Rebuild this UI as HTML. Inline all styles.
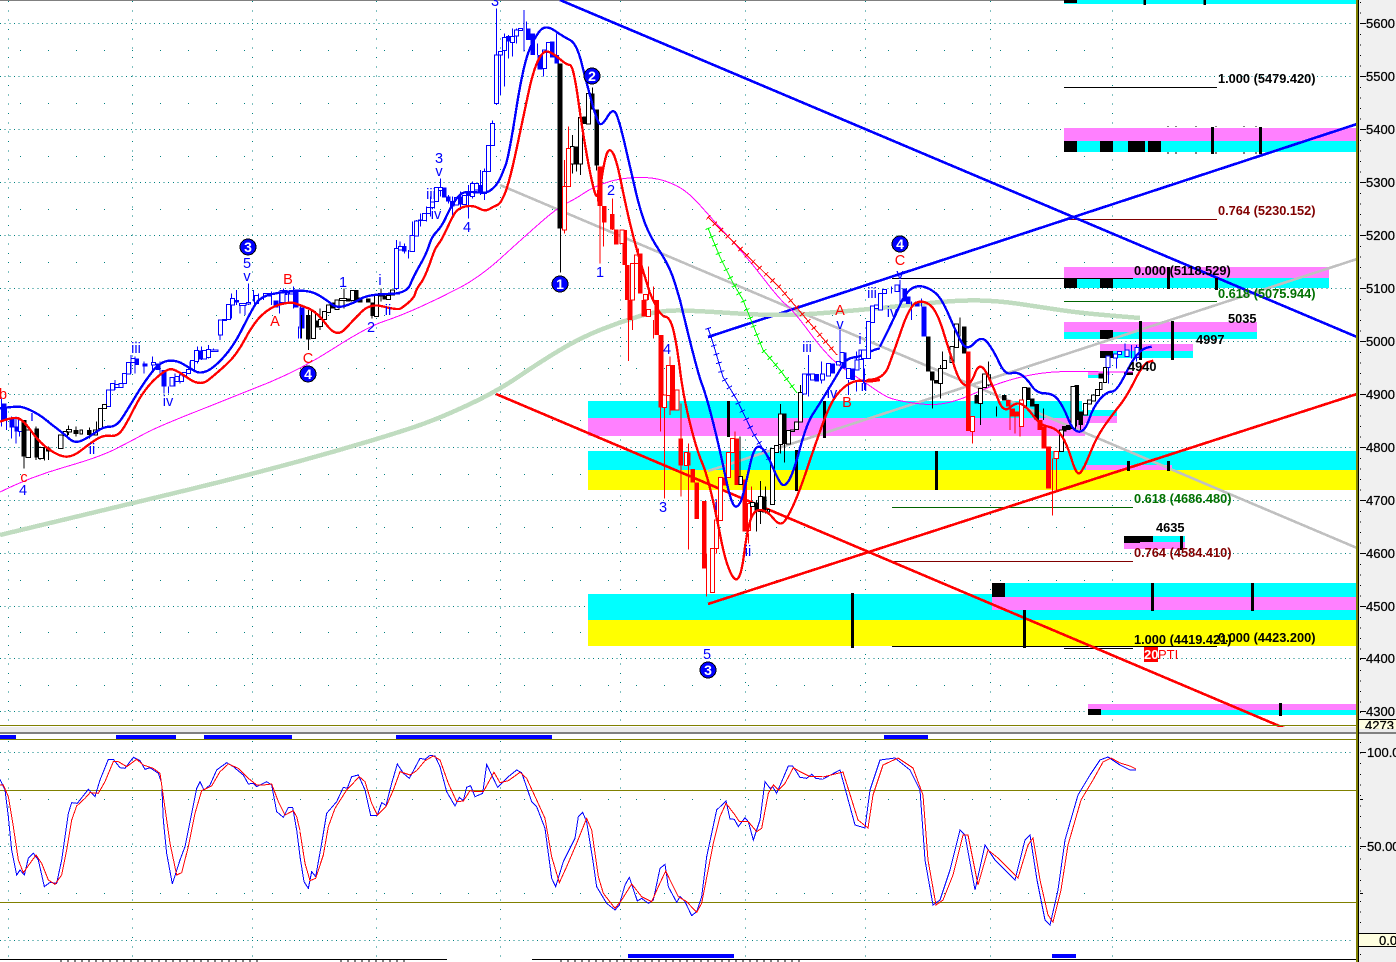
<!DOCTYPE html>
<html><head><meta charset="utf-8"><style>
html,body{margin:0;padding:0;background:#fff;overflow:hidden}
svg{display:block;font-family:"Liberation Sans",sans-serif;shape-rendering:crispEdges}
.w{fill:none;stroke-width:3}.t{fill:none;stroke-width:14}.h{fill:#fff;stroke-width:3}.b{fill:none;stroke-width:7;stroke-linejoin:round}
.bl{stroke:#00f}.k{stroke:#000}.r{stroke:#f00}
.L{font-size:14.5px;fill:#00f;text-anchor:middle}.R{font-size:14.5px;fill:#f00;text-anchor:middle}
.f{font-size:12.8px;font-weight:bold}.a{font-size:13px;fill:#000;stroke:#000;stroke-width:.25}
.c circle{fill:#00f;stroke:#000;stroke-width:1}.c text{font-size:14px;font-weight:bold;fill:#fff;text-anchor:middle}
</style></head><body>
<svg width="1396" height="962" viewBox="0 0 1396 962" xmlns="http://www.w3.org/2000/svg">
<rect width="1396" height="962" fill="#fff"/>
<rect x="1359" y="0" width="37" height="962" fill="#f0f0f0"/>
<rect x="0" y="0" width="1396" height="1" fill="#808080"/>
<!-- grid -->
<g fill="none" stroke="#008080" stroke-width="1">
<path stroke-dasharray="1 3.67" d="M0 23.5H1353M0 76.5H1353M0 129.5H1353M0 182.5H1353M0 235.5H1353M0 288.5H1353M0 341.5H1353M0 394.5H1353M0 447.5H1353M0 500.5H1353M0 553.5H1353M0 606.5H1353M0 658.5H1353M0 711.5H1353M0 752.5H1353M0 846.5H1353M0 940.5H1353"/>
<path stroke-dasharray="1 27" d="M20 50.5H1090M20 103.5H1090M20 156.5H1090M20 209.5H1090M20 262.5H1090M20 315.5H1090M20 368.5H1090M20 420.5H1090M20 474.5H1090M20 527.5H1090M20 580.5H1090M20 632.5H1090M20 685.5H1090M20 799.5H1090M20 893.5H1090"/>
<path stroke-dasharray="1 8.33" d="M8.5 1V725M132.5 1V725M252.5 1V725M376.5 1V725M500.5 1V725M620.5 1V725M745.5 1V725M865.5 1V725M990.5 1V725M1112.5 1V725M8.5 741V958M132.5 741V958M252.5 741V958M376.5 741V958M500.5 741V958M620.5 741V958M745.5 741V958M865.5 741V958M990.5 741V958M1112.5 741V958"/>
</g>
<!-- zones -->
<rect x="1064" y="0" width="292" height="4" fill="#0ff"/><rect x="1064" y="0" width="13" height="3" fill="#000"/>
<path d="M1144.5 0V5M1204.5 0V5" stroke="#000" stroke-width="2.5"/>
<rect x="1064" y="128" width="292" height="13" fill="#ff80ff"/><rect x="1064" y="141" width="292" height="11" fill="#0ff"/>
<path d="M1064 141h13v11h-13zM1100 141h13v11h-13zM1128 141h17v11h-17zM1148 141h13v11h-13z" fill="#000"/>
<path d="M1212.5 127V154M1260.5 127V154" stroke="#000" stroke-width="3"/>
<path d="M1168 126v1M1176 126v1M1196 126v1M1216 126v1M1244 126v1M1256 126v1M1168 152v2M1176 152v2M1196 152v2M1216 152v2M1244 152v2M1256 152v2" stroke="#000"/>
<rect x="1064" y="267" width="265" height="11" fill="#ff80ff"/><rect x="1064" y="278" width="265" height="10" fill="#0ff"/>
<path d="M1064 278h13v10h-13zM1100 278h13v10h-13z" fill="#000"/>
<rect x="1064" y="322" width="193" height="10" fill="#ff80ff"/><rect x="1064" y="332" width="193" height="7" fill="#0ff"/>
<rect x="1100" y="330" width="13" height="9" fill="#000"/>
<rect x="1100" y="344" width="93" height="7" fill="#ff80ff"/><rect x="1100" y="351" width="93" height="7" fill="#0ff"/>
<rect x="1100" y="351" width="13" height="7" fill="#000"/>
<rect x="588" y="401" width="494" height="17" fill="#0ff"/><rect x="588" y="418" width="497" height="18" fill="#ff80ff"/>
<rect x="1082" y="410" width="35" height="6" fill="#0ff"/><rect x="1082" y="416" width="35" height="7" fill="#ff80ff"/>
<rect x="1088" y="372" width="22" height="3" fill="#ff80ff"/><rect x="1088" y="375" width="18" height="3" fill="#0ff"/>
<rect x="1124" y="372" width="9" height="3" fill="#000"/>
<rect x="588" y="451" width="768" height="19" fill="#0ff"/><rect x="588" y="470" width="768" height="20" fill="#ff0"/>
<rect x="1086" y="465" width="86" height="5" fill="#ff80ff"/>
<rect x="588" y="594" width="768" height="26" fill="#0ff"/><rect x="588" y="620" width="768" height="26" fill="#ff0"/>
<rect x="992" y="583" width="364" height="14" fill="#0ff"/><rect x="992" y="597" width="364" height="13" fill="#ff80ff"/>
<rect x="992" y="583" width="13" height="14" fill="#000"/>
<rect x="1088" y="704" width="268" height="6" fill="#ff80ff"/><rect x="1088" y="710" width="268" height="5" fill="#0ff"/>
<rect x="1088" y="709" width="13" height="6" fill="#000"/>
<rect x="1124" y="536" width="61" height="6" fill="#0ff"/><rect x="1124" y="542" width="61" height="7" fill="#ff80ff"/>
<rect x="1124" y="536" width="29" height="6" fill="#000"/><rect x="1124" y="542" width="16" height="1" fill="#000"/>
<!-- fib lines -->
<g stroke-width="1" fill="none">
<path stroke="#000" d="M1064 87.5H1217M892 278.5H1133M892 646.5H1217M1064 648.5H1133"/>
<path stroke="#800000" d="M1064 219.5H1217M892 561.5H1133"/>
<path stroke="#006400" d="M1064 301.5H1217M892 507.5H1133"/>
</g>
<!-- trend lines -->
<g fill="none" stroke-width="2.6">
<path stroke="#c0c0c0" d="M500 185L1357 548M708 471L1357 259"/>
<path stroke="#f00" d="M496 394L1284 728M708 604L1357 394"/>
<path stroke="#00f" d="M560 0L1357 337M708 337L1357 124"/>
</g>
<!-- MAs -->
<path class="s" fill="none" stroke="#c0dcc0" stroke-width="4.5" d="M0 535L108 509L200 487L267 470L333 452L400 432L440 418L496 392L540 362L580 338L620 322L660 310L700 311L760 315L800 315L860 310L900 306L960 300L1000 301L1040 307L1080 313L1140 318"/>
<path class="s" fill="none" stroke="#f0f" stroke-width="1" d="M0 492L30 477L100 457L133 440L157 427L233 397L300 370L367 327L400 316L440 298L480 277L523 238L557 208L577 198L593 187L620 178L653 177L677 185L693 197L713 220L747 257L780 300L793 310L830 360L863 381L880 393L893 400L933 406L960 400L993 385L1027 375L1060 371L1110 372L1133 372"/>
<!-- x lines -->
<g fill="none">
<path stroke="#0f0" d="M708 228L720 257L733 283L743 300L763 350L780 370L797 393"/>
<path stroke="#0f0" stroke-width="6" stroke-dasharray="1 8" d="M708 228L720 257L733 283L743 300L763 350L780 370L797 393"/>
<path stroke="#f00" d="M708 217L780 288L837 355"/>
<path stroke="#f00" stroke-width="6" stroke-dasharray="1 8" d="M708 217L780 288L837 355"/>
<path stroke="#00f" d="M708 328L713 343L723 377L737 400L753 433L770 460"/>
<path stroke="#00f" stroke-width="6" stroke-dasharray="1 8" d="M708 328L713 343L723 377L737 400L753 433L770 460"/>
</g>
<!-- zone ticks -->
<path stroke="#000" stroke-width="3" d="M728.5 401V437M824.5 401V438M796.5 450V491M936.5 451V490M852.5 593V648M1024.5 610V648M1152.5 583V611M1252.5 583V611M1280.5 703V716M1128.5 461V471M1168.5 461V471M1140.5 321V345M1172.5 321V360M1140.5 345V360M1168.5 267V289M1216.5 278V290M1181.5 536V550"/>
<!-- candles region 1 -->
<g transform="translate(0 230) scale(.33333)">
<path class="w bl" d="M5 505V590M20 530V600M35 560V625M48 560V640M58 570V620M332 460V500M345 450V480M368 430V465M393 375V430M405 380V430M432 395V430M458 380V420M480 395V430M492 470V490M505 470V490M525 430V470M540 425V460M570 395V430M592 350V400M605 350V390M625 345V385M640 355V365M660 310V330M680 290V290M694 190V265M710 180V225M720 220V250M735 220V255M746 160V225M760 180V215M775 190V215M790 190V210M815 185V225M838 190V250M850 175V225M865 185V220M880 170V235M902 230V325M895 290V325"/>
<path class="t bl" d="M12 520V570M36 565V592M50 590V605M410 385V405M435 400V410M475 400V420M492 420V470M600 362V388M710 210V218M770 197V208M828 212V232M855 180V195M888 178V232M906 232V295"/>
<path class="h bl" d="M55 570h12v35h-12zM320 480h12v50h-12zM332 460h12v20h-12zM345 463h12v10h-12zM357 460h12v12h-12zM368 430h12v30h-12zM380 397h12v35h-12zM393 385h12v12h-12zM455 397h12v8h-12zM510 443h12v25h-12zM525 440h12v15h-12zM538 435h12v20h-12zM548 428h12v10h-12zM560 418h12v12h-12zM572 392h12v28h-12zM583 362h12v32h-12zM608 362h12v25h-12zM620 358h12v25h-12zM632 360h22v5h-22zM655 270h12v45h-12zM668 268h12v4h-12zM680 224h12v45h-12zM692 205h12v20h-12zM718 220h20v7h-20zM740 218h12v4h-12zM763 196h12v24h-12zM790 190h25v8h-25zM840 182h15v35h-15zM868 182h12v10h-12z"/>
<path class="w k" d="M72 570V716M108 590V690M120 650V690M133 650V692M145 650V690M205 587V615M228 590V620M268 592V625M290 575V610M925 240V360M905 255V325M945 245V320M960 235V300M1032 175V235M1055 180V215M1116 230V265M1143 175V215"/>
<path class="t k" d="M72 570V680M110 595V682M145 652V665M228 600V612M268 600V615M925 255V328M950 272V292M996 218V235M1045 205V215M1068 180V214M1080 202V218M1105 205V218M1118 218V258M1155 197V208"/>
<path class="h k" d="M78 600h14v82h-14zM116 652h14v33h-14zM175 615h14v40h-14zM190 605h12v12h-12zM200 598h14v8h-14zM240 600h8v12h-8zM280 600h12v15h-12zM296 535h12v60h-12zM308 523h12v12h-12zM935 245h12v80h-12zM955 268h12v22h-12zM968 245h12v24h-12zM980 225h12v22h-12zM1005 210h12v28h-12zM1018 205h22v6h-22zM1052 182h12v30h-12zM1124 196h12v64h-12zM1136 190h12v8h-12zM1160 197h12v12h-12zM1172 180h12v15h-12z"/>
<path class="b bl s" d="M0 535L40 530L70 530L120 555L150 580L190 610L225 642L270 620L310 590L350 590L385 535L430 460L480 395L530 390L570 415L600 432L640 415L700 350L750 250L780 200L850 185L930 180L980 210L1010 235L1060 220L1100 195L1200 190"/>
<path class="b r s" d="M0 575L40 560L70 570L120 640L180 680L220 680L270 640L310 615L350 620L375 590L430 480L500 415L530 420L600 470L650 430L710 375L760 280L810 232L870 215L900 225L950 245L1010 325L1060 270L1110 220L1180 237L1200 237"/>
</g>
<!-- region 2 -->
<g transform="translate(390 0) scale(.33333)">
<path class="w bl" d="M20 720V870M30 725V745M43 730V760M55 750V775M67 665V755M79 660V710M91 640V680M109 620V665M121 590V650M133 580V625M151 535V590M175 585V610M187 590V655M211 575V630M235 555V655M247 545V595M271 510V585M283 505V600M307 362V380M319 25V315M331 155V285M343 100V260M355 105V175"/>
<path class="t bl" d="M43 738V755M163 563V592M175 590V605M187 603V620M211 590V614M235 574V588M271 555V580M354 112V124"/>
<path class="h bl" d="M13 745h12v120h-12zM25 740h12v10h-12zM60 706h13v48h-13zM73 663h12v45h-12zM85 660h12v2h-12zM97 640h12v22h-12zM109 622h12v18h-12zM121 606h12v16h-12zM133 563h12v42h-12zM145 563h12v8h-12zM193 593h12v22h-12zM217 586h12v28h-12zM241 550h12v40h-12zM253 550h12v20h-12zM278 515h12v65h-12zM290 436h12v78h-12zM302 370h11v66h-11zM313 165h13v146h-13zM325 155h12v10h-12zM337 112h12v40h-12z"/>
<path class="b bl s" d="M0 882L50 880L70 830L110 760L125 710L155 680L180 625L210 580L235 575L270 578L295 578L325 550L345 500"/>
<path class="b r s" d="M30 927L70 900L80 865L100 840L120 790L135 745L155 720L185 655L200 630L225 618L255 618L285 635L310 620L330 612L345 580"/>
</g>
<!-- region 3 -->
<g transform="translate(480 0) scale(.33333)">
<path class="w bl" d="M98 85V170M110 85V130M132 30V155M140 65V110M172 130V165M230 100V190M190 205V230"/>
<path class="t bl" d="M85 108V125M145 85V120M158 100V165M180 165V208M217 125V172M230 165V190"/>
<path class="h bl" d="M92 110h12v17h-12zM104 90h12v18h-12zM116 85h12v6h-12zM188 150h12v55h-12zM200 128h12v30h-12z"/>
<path class="w k" d="M241 685V818M277 405V520M302 325V525M290 493V515M337 262V280M350 497V512"/>
<path fill="none" stroke="#000" stroke-width="15" d="M240 190V685"/>
<path class="t k" d="M289 440V493M314 350V372M337 280V328M350 328V497"/>
<path class="h k" d="M272 440h10v52h-10zM296 352h12v140h-12zM320 280h12v92h-12z"/>
<path class="w r" d="M253 480V700M265 380V560M360 500V790M352 570V605M370 620V740M397 595V690M475 745V880M505 800V900M520 860V900"/>
<path class="t r" d="M360 500V618M373 618V668M397 642V688M409 688V733M434 690V795M442 795V900M481 760V880"/>
<path class="h r" d="M248 560h12v130h-12zM259 445h12v115h-12zM420 690h12v40h-12zM452 790h12v110h-12zM464 765h12v25h-12zM490 883h12v17h-12z"/>
<path class="b bl s" d="M75 500L85 480L130 190L170 100L200 75L250 110L290 130L320 250L350 360L365 380L400 320L420 370L450 500L480 630L510 710L570 800L600 900"/>
<path class="b r s" d="M75 580L90 540L130 350L160 210L190 150L220 160L260 195L280 195L310 410L340 570L355 600L375 470L390 443L410 480L440 630L470 750L510 880"/>
</g>
<!-- region 4 -->
<g transform="translate(580 300) scale(.33333)">
<path class="w r" d="M145 60V183M157 60V90M220 60V115M241 322V395M253 322V595M270 170V345M303 310V590M325 430V748M380 760V890M410 600V760M465 395V555M505 700V730M514 560V650"/>
<path class="t r" d="M150 0V60M192 0V50M230 0V105M243 105V322M278 195V332M302 415V497M325 457V497M338 507V548M350 548V657M373 603V805M433 532V556M470 415V555M494 538V695"/>
<path class="h r" d="M247 285h12v37h-12zM259 197h13v90h-13zM200 28h12v22h-12zM285 270h12v60h-12zM314 457h8v40h-8zM392 745h12v132h-12zM404 660h12v85h-12zM415 532h12v130h-12zM439 457h12v75h-12zM451 415h12v42h-12zM502 610h9v82h-9z"/>
<path class="w k" d="M480 410V555M530 600V695M541 543V672M556 560V640M602 312V460M613 432V488M662 255V280"/>
<path class="t k" d="M530 607V635M553 590V637M613 340V432"/>
<path class="h k" d="M477 530h11v23h-11zM511 607h12v12h-12zM535 590h12v45h-12zM563 628h6v8h-6zM571 445h12v168h-12zM583 437h12v20h-12zM596 342h11v92h-11zM620 392h12v40h-12zM632 390h12v5h-12zM644 366h11v22h-11zM656 278h11v88h-11z"/>
<path class="w bl" d="M686 165V290M725 185V250M805 240V285M830 240V275M853 205V270M780 90V160M830 155V180"/>
<path class="t bl" d="M710 222V245M758 190V220M792 158V205M818 205V240"/>
<path class="h bl" d="M668 222h12v60h-12zM680 222h12v3h-12zM692 222h12v18h-12zM722 222h12v18h-12zM740 190h12v38h-12zM770 185h12v10h-12zM780 158h12v30h-12zM800 205h12v30h-12zM825 180h12v30h-12zM837 150h12v28h-12zM860 65h12v90h-12zM872 20h12v45h-12zM884 15h12v10h-12z"/>
<path class="b bl s" d="M300 0L350 210L380 290L420 450L455 620L480 620L500 540L520 450L540 435L565 470L590 530L612 565L640 520L680 370L720 310L780 210L800 175L840 170L880 150L900 145"/>
<path class="b r s" d="M210 -21L240 50L270 50L290 130L310 290L350 450L380 520L410 650L435 780L465 848L485 820L500 700L520 630L560 630L600 680L625 650L660 570L700 450L750 310L790 260L830 240L870 245L900 240"/>
</g>
<!-- region 5 -->
<g transform="translate(860 230) scale(.33333)">
<path class="w bl" d="M10 385V460M55 240V220M120 150V225M155 215V270M95 170V190M185 205V230M745 378V460M770 380V415M795 340V380M815 345V385M830 345V395"/>
<path class="t bl" d="M134 175V215M145 200V222M172 215V230"/>
<path fill="none" stroke="#00f" stroke-width="14" d="M192 230V320"/>
<path class="h bl" d="M5 360h14v25h-14zM20 275h12v110h-12zM32 228h12v50h-12zM55 190h12v50h-12zM68 178h12v12h-12zM105 165h12v20h-12zM738 378h12v35h-12zM760 372h12v12h-12zM772 365h12v8h-12zM795 360h12v20h-12zM825 352h12v30h-12z"/>
<path class="w k" d="M218 425V535M241 405V505M247 365V415M300 262V320M361 520V585M385 395V470M410 530V560M550 535V570M650 570V590M662 585V600M840 275V390"/>
<path class="t k" d="M205 320V425M217 425V452M229 450V460M313 290V370M350 495V520M433 495V512M505 472V510M517 505V530M530 522V570M613 588V605M625 585V600M650 465V570M662 545V585M722 430V445"/>
<path class="h k" d="M235 415h12v45h-12zM247 392h12v24h-12zM270 350h12v48h-12zM283 282h12v70h-12zM355 475h12v45h-12zM367 432h12v40h-12zM380 435h12v30h-12zM487 472h12v60h-12zM598 600h12v65h-12zM633 470h13v125h-13zM670 520h12v35h-12zM682 510h12v12h-12zM694 495h12v18h-12zM706 478h12v18h-12zM718 458h8v20h-8zM730 412h10v45h-10z"/>
<path class="w r" d="M337 600V640M450 520V600M465 560V610M480 590V620M578 685V857M590 685V780"/>
<path class="t r" d="M325 365V603M445 510V530M458 535V560M470 545V560M540 570V600M552 590V655"/>
<path fill="none" stroke="#f00" stroke-width="15" d="M565 650V775"/>
<path class="h r" d="M332 560h12v44h-12zM478 510h12v80h-12zM582 665h14v20h-14z"/>
<path class="b bl s" d="M60 350L100 270L135 190L170 165L210 175L245 205L290 310L320 365L365 315L400 360L435 435L470 425L500 445L530 490L580 490L610 530L640 605L675 605L700 530L740 485L770 485L820 385L850 355L875 350"/>
<path class="b r s" d="M20 450L70 450L100 370L150 225L190 210L230 240L270 370L300 460L330 470L360 390L400 470L430 550L470 515L500 530L540 585L590 595L620 640L650 738L670 720L710 620L760 550L800 500L850 400L880 392"/>
</g>
<!-- wave labels -->
<text class="R" x="3" y="399">b</text><text class="L" x="32" y="421">i</text><text class="R" x="24" y="482">c</text><text class="L" x="23" y="495">4</text><text class="L" x="92" y="454">ii</text>
<text class="L" x="136" y="353">iii</text><text class="L" x="168" y="406">iv</text><text class="L" x="247" y="268">5</text><text class="L" x="247" y="281">v</text>
<text class="R" x="288" y="284">B</text><text class="R" x="275" y="326">A</text><text class="R" x="308" y="363">C</text>
<text class="L" x="343" y="287">1</text><text class="L" x="380" y="285">i</text><text class="L" x="371" y="332">2</text><text class="L" x="388" y="315">ii</text>
<text class="L" x="439" y="163">3</text><text class="L" x="439" y="176">v</text><text class="L" x="431" y="199">iii</text><text class="L" x="436" y="219">iv</text><text class="L" x="467" y="232">4</text><text class="L" x="495" y="6">3</text>
<text class="L" x="600" y="277">1</text><text class="L" x="611" y="195">2</text><text class="L" x="667" y="354">4</text><text class="L" x="663" y="512">3</text><text class="L" x="707" y="659">5</text>
<text class="L" x="716" y="510">i</text><text class="L" x="748" y="556">ii</text><text class="L" x="807" y="352">iii</text><text class="L" x="832" y="398">iv</text>
<text class="R" x="840" y="315">A</text><text class="L" x="840" y="329">v</text><text class="L" x="860" y="344">i</text><text class="L" x="864" y="391">ii</text><text class="R" x="847" y="407">B</text>
<text class="R" x="900" y="265">C</text><text class="L" x="900" y="279">v</text><text class="L" x="872" y="298">iii</text><text class="L" x="892" y="317">iv</text>
<g class="c">
<circle cx="248" cy="247" r="8"/><text x="248" y="252">3</text>
<circle cx="308" cy="374" r="8"/><text x="308" y="379">4</text>
<circle cx="560" cy="284" r="8"/><text x="560" y="289">1</text>
<circle cx="592" cy="76" r="8"/><text x="592" y="81">2</text>
<circle cx="708" cy="670" r="8"/><text x="708" y="675">3</text>
<circle cx="900" cy="244" r="8"/><text x="900" y="249">4</text>
</g>
<!-- fib labels -->
<text class="f" x="1218" y="83" fill="#000">1.000 (5479.420)</text>
<text class="f" x="1218" y="215" fill="#800000">0.764 (5230.152)</text>
<text class="f" x="1134" y="275" fill="#000">0.000 (5118.529)</text>
<text class="f" x="1218" y="298" fill="#007000">0.618 (5075.944)</text>
<text class="f" x="1134" y="503" fill="#007000">0.618 (4686.480)</text>
<text class="f" x="1134" y="557" fill="#800000">0.764 (4584.410)</text>
<text class="f" x="1218" y="642" fill="#000">0.000 (4423.200)</text>
<text class="f" x="1134" y="644" fill="#000">1.000 (4419.421)</text>
<text class="f" x="1228" y="323" fill="#000">5035</text><text class="f" x="1196" y="344" fill="#000">4997</text><text class="f" x="1128" y="371" fill="#000">4940</text><text class="f" x="1156" y="532" fill="#000">4635</text>
<rect x="1144" y="647" width="14" height="15" fill="#f00"/>
<text x="1144" y="659" font-size="13" font-weight="bold" fill="#fff">20</text><text x="1158" y="659" font-size="13" fill="#f00">PTI</text>
<!-- stochastic -->
<g fill="none">
<path stroke="#808000" d="M0 725.5H1357M0 739.5H1357M0 790.5H1357M0 902.5H1357"/>
<g transform="translate(0 720) scale(.33333)" stroke-width="3">
<path class="bl" d="M0 178L15 210L25 290L35 390L50 465L60 450L73 465L85 415L100 400L115 420L133 500L150 487L170 490L185 420L205 280L215 248L232 250L265 208L285 230L300 180L325 118L340 118L360 143L375 145L400 112L420 122L435 148L450 143L475 160L485 190L490 300L500 400L517 492L540 420L555 380L575 280L590 205L600 185L612 210L630 195L650 150L680 128L700 140L730 165L745 192L760 190L770 200L800 185L815 195L830 275L850 292L865 262L878 262L890 330L900 410"/>
<path class="r" d="M0 195L10 195L25 230L40 320L55 420L70 458L90 430L108 405L125 430L145 480L165 493L185 465L200 390L215 300L230 258L255 235L270 218L295 220L315 185L340 125L355 125L380 140L410 118L430 135L460 145L480 160L490 230L510 370L530 465L545 458L565 380L585 280L605 212L635 198L660 155L685 132L715 145L745 175L770 195L790 195L815 192L835 245L855 285L880 272L890 290L900 332"/>
</g>
<g transform="translate(300 740) scale(.33333)" stroke-width="3">
<path class="bl" d="M0 350L12 425L25 445L35 395L47 410L65 310L80 220L110 185L130 142L142 145L155 110L175 105L195 150L212 226L232 226L245 188L258 196L275 130L292 72L310 100L328 115L360 55L375 58L390 46L405 48L420 80L440 155L465 198L478 172L490 182L500 142L512 137L525 170L548 160L560 73L575 105L593 142L625 110L650 90L665 98L695 185L710 200L735 265L745 340L755 415L767 440L790 365L825 295L835 230L848 217L860 245L880 370L890 440L920 490L945 510L958 495L975 435L988 412L1012 483L1025 475L1045 490L1060 480L1080 385L1095 373L1105 440L1130 487L1140 470L1155 485L1175 527L1190 515L1205 470L1220 350L1250 210L1278 183L1290 237L1303 238L1315 260L1335 233L1345 245L1360 300L1380 240L1395 125L1410 145L1418 140L1430 160L1465 78L1478 78L1500 112L1520 115L1535 103L1548 115L1568 118"/>
<path class="r" d="M0 275L15 370L30 422L47 415L70 345L85 260L105 205L140 150L178 110L195 125L215 190L232 225L258 200L280 150L300 95L330 105L350 92L375 62L400 48L420 60L445 130L470 185L490 183L510 152L530 155L550 155L582 97L600 128L625 122L660 97L680 115L710 180L735 235L755 350L778 428L800 380L830 310L860 235L875 270L895 410L910 460L945 505L965 480L995 432L1025 470L1055 485L1075 440L1097 393L1115 430L1135 470L1160 485L1190 517L1205 490L1240 310L1260 230L1278 190L1305 225L1318 245L1345 245L1370 275L1385 265L1405 160L1420 135L1435 150L1455 130L1480 83L1500 95L1530 110L1568 110"/>
</g>
<path stroke="#00f" d="M823 779L840 770L855 825L865 828L870 790L880 760L895 758L910 770L920 790L925 860L933 905L940 900L950 870L960 830L965 835L975 890L985 845L995 860L1005 870L1015 880L1025 840L1030 835L1037 880L1045 920L1050 925L1058 890L1065 840L1078 795L1090 775L1100 760L1108 757L1120 765L1126 768L1130 770L1136 770"/>
<path stroke="#f00" d="M823 777L843 772L858 820L868 828L873 795L883 765L898 758L913 768L923 795L928 860L936 905L943 900L953 875L963 835L968 835L978 885L988 850L998 858L1008 868L1018 878L1028 845L1033 838L1040 880L1048 915L1053 922L1061 890L1068 845L1081 800L1093 780L1103 762L1111 758L1120 763L1130 766L1136 769"/>
</g>
<!-- separators -->
<rect x="0" y="727" width="1396" height="5" fill="#ececec"/>
<rect x="0" y="732" width="1396" height="2" fill="#808080"/>
<path fill="#00f" d="M0 735h16v4H0zM116 735h60v4h-60zM204 735h88v4h-88zM396 735h156v4H396zM884 735h44v4h-44zM628 954h106v4H628zM1052 954h24v4h-24z"/>
<path stroke="#808000" d="M0 739.5H1357"/>
<path stroke="#000" d="M0 959.5H447M532 959.5H1360"/>
<path stroke="#000" stroke-dasharray="2 5" d="M60 961H260M340 961H405M560 961H800"/>
<!-- axis -->
<rect x="1356" y="0" width="2" height="962" fill="#808000"/>
<rect x="1358" y="0" width="1" height="962" fill="#000"/>
<rect x="1359" y="0" width="37" height="727" fill="#f0f0f0"/>
<rect x="1359" y="734" width="37" height="228" fill="#f0f0f0"/>
<path stroke="#000" d="M1360 23.5h6M1360 76.5h6M1360 129.5h6M1360 182.5h6M1360 235.5h6M1360 288.5h6M1360 341.5h6M1360 394.5h6M1360 447.5h6M1360 500.5h6M1360 553.5h6M1360 606.5h6M1360 658.5h6M1360 711.5h6M1360 752.5h6M1360 846.5h6M1360 799.5h3M1360 893.5h3"/>
<path stroke="#000" fill="none" stroke-dasharray="1 9.6" d="M1360.5 2V720M1360.5 742V958"/>
<g class="a">
<text x="1366" y="28">5600</text><text x="1366" y="81">5500</text><text x="1366" y="134">5400</text><text x="1366" y="187">5300</text><text x="1366" y="240">5200</text><text x="1366" y="293">5100</text><text x="1366" y="346">5000</text><text x="1366" y="399">4900</text><text x="1366" y="452">4800</text><text x="1366" y="505">4700</text><text x="1366" y="558">4600</text><text x="1366" y="611">4500</text><text x="1366" y="663">4400</text><text x="1366" y="716">4300</text>
<text x="1367" y="757">100.0</text><text x="1367" y="851">50.00</text>
</g>
<svg x="1359" y="719" width="37" height="10" overflow="hidden">
<rect width="37" height="10" fill="#ffffe0"/><path stroke="#000" d="M0 .5H37"/>
<text x="6" y="11" class="a">4273</text>
</svg>
<rect x="1359" y="933" width="37" height="14" fill="#ffffe0"/><path stroke="#000" d="M1359 933.5H1396M1359 946.5H1396"/>
<text x="1379" y="945" class="a">0.0</text>
</svg>
<script>
document.querySelectorAll('path.s').forEach(function(p){
var n=p.getAttribute('d').match(/-?[\d.]+/g).map(Number),d='M'+n[0]+' '+n[1];
for(var i=2;i<n.length-2;i+=2){d+='Q'+n[i]+' '+n[i+1]+' '+(n[i]+n[i+2])/2+' '+(n[i+1]+n[i+3])/2}
d+='L'+n[n.length-2]+' '+n[n.length-1];p.setAttribute('d',d)});
</script>
</body></html>
